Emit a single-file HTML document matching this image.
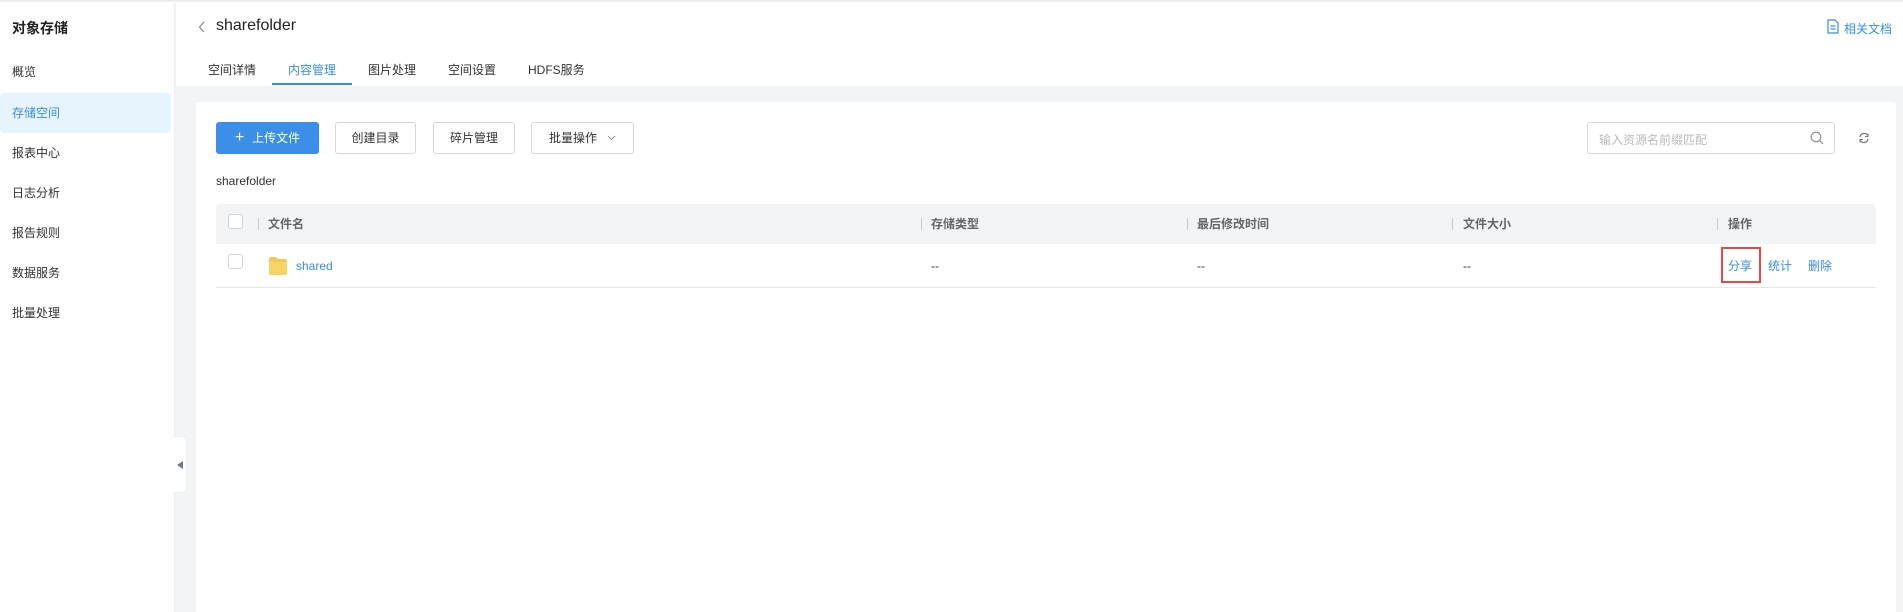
<!DOCTYPE html>
<html style="overflow:hidden;width:1903px;height:612px"><head><meta charset="utf-8"><style>
*{box-sizing:border-box;margin:0;padding:0}
body{width:1903px;height:612px;overflow:hidden;background:#f3f4f6;font-family:"Liberation Sans","Noto Sans CJK SC",sans-serif;font-size:12px;color:#333;position:relative}
.abs{position:absolute}
.side{left:0;top:0;width:175px;height:612px;background:#fff;border-right:1px solid #eceef2}
.side .t{left:12px;top:18px;font-size:14px;font-weight:bold;color:#222}
.side .i{left:12px;font-size:12px;color:#333;line-height:16px}
.act{left:0;top:93px;width:171px;height:40px;background:#e7f4fd;border-radius:4px}
.head{left:176px;top:0;width:1727px;height:86px;background:#fff}
.tab{top:61px;font-size:12px;color:#333}
.card{left:196px;top:102px;width:1700px;height:510px;background:#fff;border-radius:3px 3px 0 0}
.btn{top:122px;height:32px;border:1px solid #d4d7dc;border-radius:3px;background:#fff;font-size:12px;color:#333;line-height:30px;text-align:center}
.th{font-weight:bold;color:#666;top:217px;line-height:14px}
.sep{top:218px;width:1px;height:12px;background:#c8cbd0}
.cb{width:15px;height:15px;border:1px solid #d0d3d8;border-radius:3px;background:#fff}
.cell{top:259px;color:#333;line-height:14px}
.lnk{top:259px;color:#3a8de6;line-height:14px}
</style></head><body>
<div class="abs" style="left:0;top:0;width:1903px;height:3px;background:linear-gradient(#e6e6e6,#fff);z-index:5"></div>
<div class="abs side">
<div class="abs t">对象存储</div>
<div class="abs act"></div>
<div class="abs i" style="top:64px">概览</div>
<div class="abs i" style="top:105px;color:#3a8de6">存储空间</div>
<div class="abs i" style="top:145px">报表中心</div>
<div class="abs i" style="top:185px">日志分析</div>
<div class="abs i" style="top:225px">报告规则</div>
<div class="abs i" style="top:265px">数据服务</div>
<div class="abs i" style="top:305px">批量处理</div>
</div>
<div class="abs" style="left:174px;top:436px;width:13px;height:57px;background:#fff;border-radius:0 5px 5px 0;border:1px solid #eee;border-left:none"></div>
<div class="abs" style="left:177px;top:461px;width:0;height:0;border-top:4.5px solid transparent;border-bottom:4.5px solid transparent;border-right:6px solid #6f7a87"></div>
<div class="abs head">
<svg class="abs" style="left:22px;top:21px" width="8" height="12"><path d="M6 1L1.5 6L6 11" fill="none" stroke="#888" stroke-width="1.2"/></svg>
<div class="abs" style="left:40px;top:17px;font-size:16px;color:#222">sharefolder</div>
<div class="abs tab" style="left:32px">空间详情</div>
<div class="abs tab" style="left:112px;color:#3a8de6">内容管理</div>
<div class="abs" style="left:96px;top:83px;width:80px;height:2px;background:#3a8de6"></div>
<div class="abs tab" style="left:192px">图片处理</div>
<div class="abs tab" style="left:272px">空间设置</div>
<div class="abs tab" style="left:352px">HDFS服务</div>
<svg class="abs" style="left:1651px;top:19px" width="12" height="15"><path d="M1 1H8L11 4V14H1Z" fill="none" stroke="#3a8de6" stroke-width="1.2"/><path d="M3.5 7H8.5M3.5 10H8.5" stroke="#3a8de6" stroke-width="1.2"/></svg>
<div class="abs" style="left:1668px;top:20px;color:#3a8de6">相关文档</div>
</div>
<div class="abs card"></div>
<div class="abs btn" style="left:216px;width:103px;background:#3b8fe8;border-color:#3b8fe8;color:#fff"><span style="font-size:16px;margin-right:8px">+</span>上传文件</div>
<div class="abs btn" style="left:335px;width:81px">创建目录</div>
<div class="abs btn" style="left:433px;width:82px">碎片管理</div>
<div class="abs btn" style="left:531px;width:103px">批量操作<svg style="margin-left:10px;vertical-align:1px" width="9" height="6"><path d="M1 1L4.5 4.5L8 1" fill="none" stroke="#999" stroke-width="1"/></svg></div>
<div class="abs" style="left:1587px;top:122px;width:248px;height:32px;border:1px solid #d4d7dc;border-radius:3px;background:#fff"></div>
<div class="abs" style="left:1599px;top:131px;color:#bbb">输入资源名前缀匹配</div>
<svg class="abs" style="left:1810px;top:131px" width="14" height="14"><circle cx="6" cy="6" r="4.8" fill="none" stroke="#888" stroke-width="1.1"/><path d="M9.5 9.5L13 13" stroke="#888" stroke-width="1.1"/></svg>
<svg class="abs" style="left:1858px;top:132px" width="12" height="12"><path d="M2 5A4.2 4.2 0 0 1 10 4M10 7A4.2 4.2 0 0 1 2 8" fill="none" stroke="#777" stroke-width="1.2"/><path d="M10 1.5V4.5H7M2 10.5V7.5H5" fill="none" stroke="#777" stroke-width="1"/></svg>
<div class="abs" style="left:216px;top:174px;color:#333">sharefolder</div>
<div class="abs" style="left:216px;top:204px;width:1660px;height:40px;background:#f3f4f6;border-radius:4px 4px 0 0"></div>
<div class="abs" style="left:216px;top:287px;width:1660px;height:1px;background:#e4e6ea"></div>
<div class="abs cb" style="left:228px;top:214px"></div>
<div class="abs sep" style="left:258px"></div><div class="abs th" style="left:268px">文件名</div>
<div class="abs sep" style="left:921px"></div><div class="abs th" style="left:931px">存储类型</div>
<div class="abs sep" style="left:1187px"></div><div class="abs th" style="left:1197px">最后修改时间</div>
<div class="abs sep" style="left:1452px"></div><div class="abs th" style="left:1463px">文件大小</div>
<div class="abs sep" style="left:1717px"></div><div class="abs th" style="left:1728px">操作</div>
<div class="abs cb" style="left:228px;top:254px"></div>
<svg class="abs" style="left:268px;top:256px" width="20" height="20"><path d="M1 3Q1 1 3 1H8L10 3H17Q19 3 19 5V17Q19 19 17 19H3Q1 19 1 17Z" fill="#f5c955"/><path d="M1 6H19V17Q19 19 17 19H3Q1 19 1 17Z" fill="#f8d466"/></svg>
<div class="abs lnk" style="left:296px">shared</div>
<div class="abs cell" style="left:931px">--</div>
<div class="abs cell" style="left:1197px">--</div>
<div class="abs cell" style="left:1463px">--</div>
<div class="abs" style="left:1721px;top:247px;width:40px;height:36px;border:2px solid #e14b4b"></div>
<div class="abs lnk" style="left:1728px">分享</div>
<div class="abs lnk" style="left:1768px">统计</div>
<div class="abs lnk" style="left:1808px">删除</div>
</body></html>
